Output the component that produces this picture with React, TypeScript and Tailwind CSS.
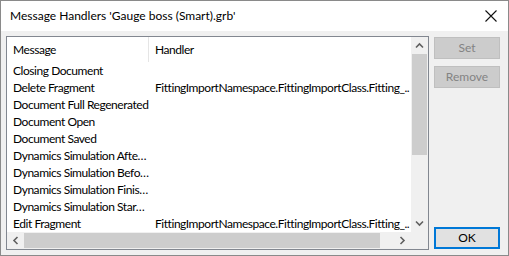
import React from "react";

const rows: [string, string][] = [
  ["Closing Document", ""],
  ["Delete Fragment", "FittingImportNamespace.FittingImportClass.Fitting_.."],
  ["Document Full Regenerated", ""],
  ["Document Open", ""],
  ["Document Saved", ""],
  ["Dynamics Simulation Afte…", ""],
  ["Dynamics Simulation Befo…", ""],
  ["Dynamics Simulation Finis…", ""],
  ["Dynamics Simulation Star…", ""],
  ["Edit Fragment", "FittingImportNamespace.FittingImportClass.Fitting_.."],
];

function Chevron({ dir }: { dir: "up" | "down" | "left" | "right" }) {
  const rot = { up: 0, right: 90, down: 180, left: 270 }[dir];
  return (
    <svg width="9" height="9" viewBox="0 0 9 9" style={{ transform: `rotate(${rot}deg)` }}>
      <path d="M1 6.5 L4.5 3 L8 6.5" fill="none" stroke="#606060" strokeWidth="1.6" />
    </svg>
  );
}

export default function App() {
  return (
    <div
      className="w-[509px] h-[256px] border border-[#8a8a8a] flex flex-col bg-[#f0f0f0] text-[12px] text-black overflow-hidden"
      style={{ fontFamily: 'Lato, "Noto Sans", "Liberation Sans", sans-serif' }}
    >
      {/* title bar */}
      <div className="h-[30px] bg-white flex items-center pl-[9px] shrink-0">
        <span className="flex-1 leading-none">Message Handlers 'Gauge boss (Smart).grb'</span>
        <svg width="12" height="12" viewBox="0 0 12 12" className="mr-[11px]">
          <path d="M0.5 0.5 L11.5 11.5 M11.5 0.5 L0.5 11.5" stroke="#111" strokeWidth="1.1" />
        </svg>
      </div>

      <div className="flex-1 flex pl-[5px] pt-[5px]">
        {/* list view */}
        <div className="w-[423px] h-[214px] border border-[#828790] bg-white flex flex-col">
          <div className="flex h-[195px]">
            <div className="w-[404px] overflow-hidden tracking-[-0.45px]">
              <div className="flex h-[25px] items-center">
                <div className="w-[142px] shrink-0 pl-[6px] h-full flex items-center border-r border-[#e5e5e5]">Message</div>
                <div className="pl-[6px]">Handler</div>
              </div>
              {rows.map(([m, h]) => (
                <div key={m} className="flex h-[17px] items-center whitespace-nowrap leading-none">
                  <div className="w-[142px] shrink-0 pl-[6px]">{m}</div>
                  <div className="pl-[6px]">{h}</div>
                </div>
              ))}
            </div>
            {/* vertical scrollbar */}
            <div className="w-[17px] bg-[#f0f0f0] flex flex-col">
              <div className="h-[17px] flex items-center justify-center"><Chevron dir="up" /></div>
              <div className="flex-1 flex flex-col">
                <div className="h-[101px] bg-[#cdcdcd] mx-[1px]" />
              </div>
              <div className="h-[17px] flex items-center justify-center"><Chevron dir="down" /></div>
            </div>
          </div>
          {/* horizontal scrollbar */}
          <div className="flex h-[17px]">
            <div className="w-[404px] bg-[#f0f0f0] flex">
              <div className="w-[17px] flex items-center justify-center"><Chevron dir="left" /></div>
              <div className="flex-1 flex items-center">
                <div className="w-[356px] h-[15px] bg-[#cdcdcd]" />
              </div>
              <div className="w-[17px] flex items-center justify-center"><Chevron dir="right" /></div>
            </div>
            <div className="w-[17px] bg-[#f0f0f0]" />
          </div>
        </div>

        {/* buttons */}
        <div className="ml-[5px] w-[66px] flex flex-col">
          <button className="h-[22px] mt-[1px] bg-[#cccccc] border border-[#bfbfbf] text-[#838383]">Set</button>
          <button className="h-[22px] mt-[7px] bg-[#cccccc] border border-[#bfbfbf] text-[#838383]">Remove</button>
          <button className="h-[22px] mt-auto mb-[6px] bg-[#e1e1e1] border-2 border-[#0078d7]">OK</button>
        </div>
      </div>
    </div>
  );
}
